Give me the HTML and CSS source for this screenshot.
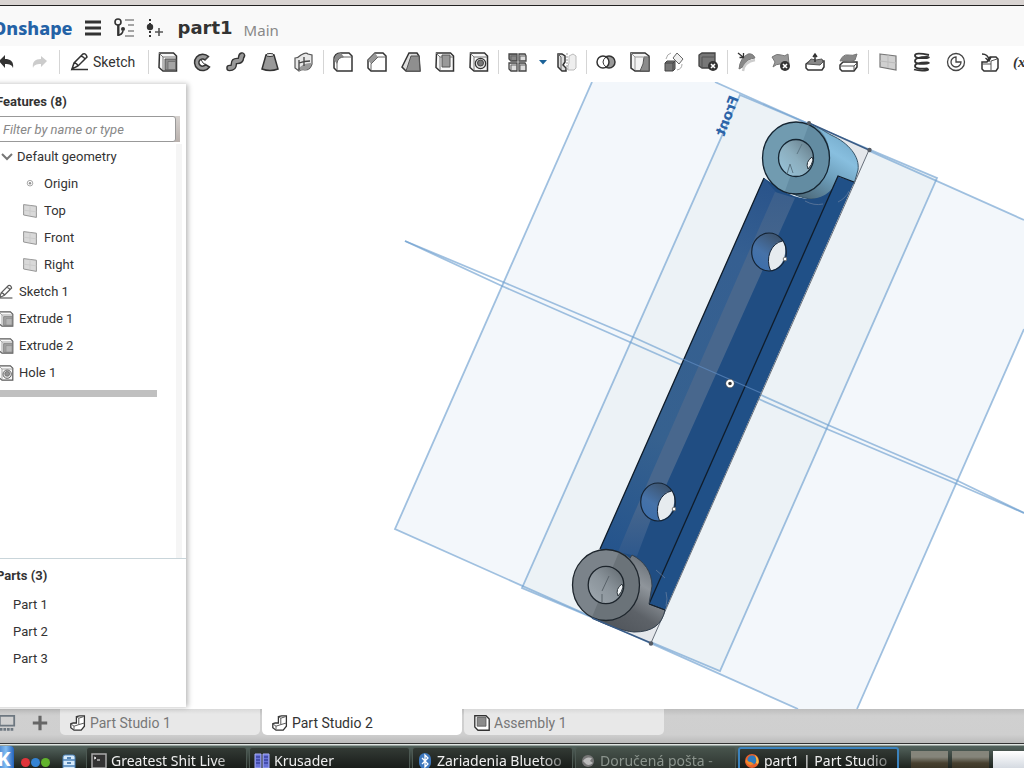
FILE: index.html
```html
<!DOCTYPE html>
<html lang="en">
<head>
<meta charset="utf-8">
<title>part1 | Part Studio 2</title>
<link rel="stylesheet" href="styles.css">
</head>
<body>
<svg class="sprite" aria-hidden="true">
  <symbol id="i-undo" viewBox="0 0 20 20"><path d="M3 9l6-6v4c6 0 9 3 8 9-1-3-3-4-8-4v4z" fill="#333"/></symbol>
  <symbol id="i-redo" viewBox="0 0 20 20"><path d="M17 9l-6-5v3c-6 0-9 3-8 9 1-3 3-4 8-4v3z" fill="#ccc"/></symbol>
  <symbol id="i-pencil" viewBox="0 0 20 20"><path d="M2 17l2-6 9-9q3-1 4 3l-9 9zM4 11q3 0 4 3M11 4q3 1 4 3" fill="#fff" stroke="#333" stroke-width="1.5"/><path d="M1 17.500h17" stroke="#333" stroke-width="1.500"/></symbol>
  <symbol id="i-extrude" viewBox="0 0 20 20"><path d="M1.500 1h14l3 3v15H5L1 15.500z" fill="#f7f7f7" stroke="#333" stroke-width="1.500"/><path d="M1 1l4 4h13M5 5v13" fill="none" stroke="#777"/><path d="M7 7h11v11H7z" fill="#8c8c8c" stroke="#555"/><path d="M10 9.500h7.500v8H10z" fill="#a5a5a5" stroke="#666" stroke-width=".7"/></symbol>
  <symbol id="i-revolve" viewBox="0 0 20 20"><path d="M16.500 4.500a8.200 8.200 0 1 0 1 10.500l-4-2.500a3.600 3.600 0 1 1-.5-4.500z" fill="#999" stroke="#333" stroke-width="1.500"/><path d="M13 8l3.500-3.500M9 7.500L11 11l2.500 1.500" fill="none" stroke="#444"/></symbol>
  <symbol id="i-sweep" viewBox="0 0 20 20"><path d="M3.500 16c8 0 1-7 7.500-7 6 0 3-5 5-5.500" fill="none" stroke="#333" stroke-width="6.600" stroke-linecap="round"/><path d="M3.500 16c8 0 1-7 7.500-7 6 0 3-5 5-5.500" fill="none" stroke="#999" stroke-width="3.800" stroke-linecap="round"/></symbol>
  <symbol id="i-loft" viewBox="0 0 20 20"><path d="M6 3L2 17q8 3 16 0L14 3z" fill="#999" stroke="#333" stroke-width="1.500"/><ellipse cx="10" cy="3" rx="4" ry="1.500" fill="#eee" stroke="#333"/></symbol>
  <symbol id="i-thicken" viewBox="0 0 20 20"><path d="M1 6q3 0 6-3 5-3 7-1l4 1v9q-2 6-7 6-3-1-6 1l-4-3z" fill="#e8e8e8" stroke="#555" stroke-width="1.200"/><path d="M4 17q6-7 14-6-2 7-7 7-3-1-6 1z" fill="#999"/><path d="M10 5v9M5 11q5-2 11-2M5 8v10" fill="none" stroke="#444" stroke-width="1.300"/></symbol>
  <symbol id="i-fillet" viewBox="0 0 20 20"><path d="M8 1h8l3 3v15H4l-3-3V8q0-7 7-7z" fill="#fff" stroke="#333" stroke-width="1.500"/><path d="M1 8q1-7 7-7l3 4q-6 0-7 7z" fill="#8a8a8a"/><path d="M4 18v-7q1-6 7-6h7" fill="none" stroke="#666"/></symbol>
  <symbol id="i-chamfer" viewBox="0 0 20 20"><path d="M8 1h8l3 3v15H4l-3-3V8z" fill="#fff" stroke="#333" stroke-width="1.500"/><path d="M1 8l7-7 3 4-7 7z" fill="#999"/><path d="M4 18v-6l7-7h7" fill="none" stroke="#666"/></symbol>
  <symbol id="i-draft" viewBox="0 0 20 20"><path d="M8 1h8l2 3 1 15H5l-4-4z" fill="#ddd" stroke="#333" stroke-width="1.500"/><path d="M10 4h8l1 15H5z" fill="#8f8f8f" stroke="#555"/></symbol>
  <symbol id="i-shell" viewBox="0 0 20 20"><path d="M1.500 1h14l3 3v15H5L1 15.500z" fill="#f7f7f7" stroke="#333" stroke-width="1.500"/><path d="M1 1l4 4h13M5 5v13" fill="none" stroke="#777"/><path d="M7 3h8v12H7z" fill="#999" stroke="#555"/></symbol>
  <symbol id="i-hole" viewBox="0 0 20 20"><path d="M1.500 1h14l3 3v15H5L1 15.500z" fill="#f7f7f7" stroke="#333" stroke-width="1.500"/><path d="M1 1l4 4h13M5 5v13" fill="none" stroke="#777"/><circle cx="11.500" cy="11.500" r="5.200" fill="#ddd" stroke="#333" stroke-width="1.200"/><circle cx="11.500" cy="11" r="3" fill="#777" stroke="#444"/></symbol>
  <symbol id="i-pattern" viewBox="0 0 20 20"><g stroke="#444" stroke-width="1.300"><path d="M1 2h8v7H3L1 7z" fill="#888"/><path d="M11 2h6l1 2v5h-7zM1 11h8v8H3l-2-2zM11 11h6l1 2v6h-7z" fill="#ddd"/></g><path d="M3 9V4h6M12 9V4h6M3 18v-5h6M12 18v-5h6" fill="none" stroke="#666"/></symbol>
  <symbol id="i-mirror" viewBox="0 0 20 20"><path d="M1 2h4l3 2v6l-2 3 3 3v3H5l-4-4z" fill="#ddd" stroke="#333" stroke-width="1.500"/><path d="M4 17V5L1 2" fill="none" stroke="#666"/><path d="M19 4l-3-2-4 2v7l-1 3v4h6l2-2z" fill="#eee" stroke="#bbb"/><path d="M10 1v18" stroke="#999" stroke-dasharray="2 1"/></symbol>
  <symbol id="i-boolean" viewBox="0 0 20 20"><circle cx="13" cy="10" r="6" fill="#999" stroke="#333" stroke-width="1.500"/><circle cx="7" cy="10" r="6" fill="#fff" stroke="#333" stroke-width="1.500"/><path d="M10 5q-6 5 0 10" fill="none" stroke="#333"/></symbol>
  <symbol id="i-split" viewBox="0 0 20 20"><path d="M1 1h14l4 3v15H5l-4-3z" fill="#f4f4f4" stroke="#333" stroke-width="1.500"/><path d="M14 5h5v14h-9q4-7 4-14z" fill="#8b8b8b" stroke="#555"/><path d="M1 1l4 4h13M5 5v13" fill="none" stroke="#999"/></symbol>
  <symbol id="i-transform" viewBox="0 0 20 20"><path d="M1 11l2-2h8v8l-2 2H1z" fill="#777" stroke="#444"/><path d="M1 11h8v8M9 11l2-2" fill="none" stroke="#444"/><path d="M9 6l4-5 6 6-4 5z" fill="#eee" stroke="#666"/><path d="M2 7q1-5 5-6M18 12q0 5-5 6" fill="none" stroke="#aaa"/></symbol>
  <symbol id="i-delete" viewBox="0 0 20 20"><path d="M1 3l3-2h13v13l-3 2H4l-3-2z" fill="#777" stroke="#444" stroke-width="1.300"/><path d="M4 16V5h13" fill="none" stroke="#555"/><circle cx="15" cy="14" r="5" fill="#333"/><path d="M13 12l4 4m0-4l-4 4" stroke="#fff" stroke-width="1.600"/></symbol>
  <symbol id="i-offset" viewBox="0 0 20 20"><path d="M2 17q1-11 9-15 5-1 7 4-8 1-10 6-1 3-6 5z" fill="#888" stroke="#777"/><path d="M6 19q1-9 12-11" fill="none" stroke="#ccc" stroke-width="2.500"/><path d="M1 1l5 4M6.500 1v4.500H2.500" fill="none" stroke="#333" stroke-width="1.300"/></symbol>
  <symbol id="i-delface" viewBox="0 0 20 20"><path d="M1 5q5-4 9-2t7-1l1 10q-4 3-9 0-4 0-7 3l2-5z" fill="#999" stroke="#777"/><circle cx="14" cy="14" r="5" fill="#333"/><path d="M12 12l4 4m0-4l-4 4" stroke="#fff" stroke-width="1.600"/></symbol>
  <symbol id="i-moveface" viewBox="0 0 20 20"><path d="M1 12l4-3h14v6l-2 3H3l-2-2z" fill="#fff" stroke="#333" stroke-width="1.500"/><path d="M2 12l4-5q4 2 11 0l1 3-3 3z" fill="#888" stroke="#555"/><path d="M10 10V3M8 5l2-3 2 3" fill="none" stroke="#333" stroke-width="1.500"/></symbol>
  <symbol id="i-replace" viewBox="0 0 20 20"><path d="M1 13l3-3h14v5l-3 4H3l-2-2z" fill="#fff" stroke="#333" stroke-width="1.500"/><path d="M1 9q3-7 8-6 5 1 9-1l-2 6q-4 2-8 1-4-1-7 0z" fill="#888" stroke="#777"/><path d="M2 14h13l3-3M15 14v4" fill="none" stroke="#555"/></symbol>
  <symbol id="i-plane" viewBox="0 0 20 20"><path d="M2 2l16 2v14L2 15z" fill="#d0d0d0" stroke="#777" stroke-width="1.200"/><path d="M2 9l16 2M10 3v13" stroke="#bbb"/></symbol>
  <symbol id="i-helix" viewBox="0 0 20 20"><path d="M17 3Q3 0 3 3.500T15 6q4-.5 0-1Q3 5 3 9t12 2.500q4-.5 0-1Q3 10.500 3 14t12 2.500q3 1.500-2 2-6 .5-11-1" fill="none" stroke="#333" stroke-width="1.800"/></symbol>
  <symbol id="i-clock" viewBox="0 0 20 20"><circle cx="10" cy="10" r="8.500" fill="#fff" stroke="#444" stroke-width="1.300"/><path d="M10 5v5h5a5 5 0 1 1-5-5z" fill="none" stroke="#444" stroke-width="1.300"/></symbol>
  <symbol id="i-derive" viewBox="0 0 20 20"><path d="M2 10h5l3-5h6l2 2v9l-2 3H4l-2-2z" fill="#fff" stroke="#333" stroke-width="1.500"/><path d="M2 12h9v6M11 12V9l6-2" fill="none" stroke="#555"/><path d="M2 2q6 0 7 6M5.500 6L9 9l2-4" fill="none" stroke="#333" stroke-width="1.500"/></symbol>
  <symbol id="i-origin" viewBox="0 0 20 20"><circle cx="10" cy="9" r="3.500" fill="#fff" stroke="#777"/><circle cx="10" cy="9" r="1.500" fill="#777"/></symbol>
  <symbol id="i-studio" viewBox="0 0 20 20"><path d="M8 2l4-1h6v13l-4 5H5l-4-3v-5l3-1h4z" fill="#fff" stroke="#333" stroke-width="1.600"/><path d="M8 2l3 2v8l-6 2-4-3M11 12l7-2M5 14v4M11 4l6-2" fill="none" stroke="#555" stroke-width="1.200"/></symbol>
  <symbol id="i-assembly" viewBox="0 0 20 20"><path d="M1 1h14l4 4v14H5l-4-4z" fill="#fff" stroke="#333" stroke-width="1.700"/><path d="M4 3h11v11H4z" fill="#8b8b8b" stroke="#555"/></symbol>
  <symbol id="cut" viewBox="0 0 36 40"><ellipse cx="18" cy="20" rx="17.300" ry="19" fill="url(#bore)"/><path d="M31.500 9A16.500 20 0 0 0 19.500 38.500C31 37 37 23 33 10z" fill="#e6ebef"/><path d="M31.500 9A16.500 20 0 0 0 19.500 38.500" fill="none" stroke="#17263a"/><ellipse cx="18" cy="20" rx="17.300" ry="19" fill="none" stroke="#142334" stroke-width="1.200"/><circle cx="34" cy="27" r="1.800" fill="#fff" stroke="#777"/></symbol>
</svg>

<div class="app">
  <div class="window-edge"></div>
  <header class="header">
    <a class="brand" href="#">Onshape</a>
    <button class="icon-button" aria-label="Menu"><svg viewBox="0 0 18 18"><path d="M1 3h16M1 9h16M1 15h16" stroke="#333" stroke-width="3"/></svg></button>
    <button class="icon-button versions" aria-label="Versions and history"><svg viewBox="0 0 22 20"><g fill="none" stroke="#333" stroke-width="1.600"><circle cx="5" cy="4" r="3"/><path d="M5 7v10q4 0 5-4"/></g><path d="M4.500 7h2v11h-2z" fill="#333"/><circle cx="10" cy="11" r="2" fill="#333"/><path d="M12 2h9M12 18h9M15 7h6M15 13h6" stroke="#888" stroke-width="1.500"/></svg></button>
    <button class="icon-button" aria-label="Create version"><svg viewBox="0 0 18 20"><path d="M4 1v18" stroke="#333" stroke-width="2" stroke-dasharray="2 2"/><circle cx="4" cy="9" r="3.200" fill="#333"/><path d="M13 10v8M9 14h8" stroke="#555" stroke-width="1.600"/></svg></button>
    <h1 class="doc-name">part1</h1>
    <span class="branch">Main</span>
  </header>

  <nav class="toolbar" aria-label="Features toolbar">
    <button class="tool" aria-label="Undo"><svg><use href="#i-undo"/></svg></button>
    <button class="tool" aria-label="Redo"><svg><use href="#i-redo"/></svg></button>
    <span class="separator"></span>
    <button class="sketch-button"><svg><use href="#i-pencil"/></svg>Sketch</button>
    <span class="separator"></span>
    <button class="tool" aria-label="Extrude"><svg><use href="#i-extrude"/></svg></button>
    <button class="tool" aria-label="Revolve"><svg><use href="#i-revolve"/></svg></button>
    <button class="tool" aria-label="Sweep"><svg><use href="#i-sweep"/></svg></button>
    <button class="tool" aria-label="Loft"><svg><use href="#i-loft"/></svg></button>
    <button class="tool" aria-label="Thicken"><svg><use href="#i-thicken"/></svg></button>
    <span class="separator"></span>
    <button class="tool" aria-label="Fillet"><svg><use href="#i-fillet"/></svg></button>
    <button class="tool" aria-label="Chamfer"><svg><use href="#i-chamfer"/></svg></button>
    <button class="tool" aria-label="Draft"><svg><use href="#i-draft"/></svg></button>
    <button class="tool" aria-label="Shell"><svg><use href="#i-shell"/></svg></button>
    <button class="tool" aria-label="Hole"><svg><use href="#i-hole"/></svg></button>
    <span class="separator"></span>
    <button class="tool" aria-label="Linear pattern"><svg><use href="#i-pattern"/></svg></button>
    <button class="caret" aria-label="More patterns"><svg viewBox="0 0 8 5"><path d="M0 0h8L4 4.500z" fill="#1b6298"/></svg></button>
    <button class="tool" aria-label="Mirror"><svg><use href="#i-mirror"/></svg></button>
    <span class="separator"></span>
    <button class="tool" aria-label="Boolean"><svg><use href="#i-boolean"/></svg></button>
    <button class="tool" aria-label="Split"><svg><use href="#i-split"/></svg></button>
    <button class="tool" aria-label="Transform"><svg><use href="#i-transform"/></svg></button>
    <button class="tool" aria-label="Delete part"><svg><use href="#i-delete"/></svg></button>
    <span class="separator"></span>
    <button class="tool" aria-label="Modify fillet"><svg><use href="#i-offset"/></svg></button>
    <button class="tool" aria-label="Delete face"><svg><use href="#i-delface"/></svg></button>
    <button class="tool" aria-label="Move face"><svg><use href="#i-moveface"/></svg></button>
    <button class="tool" aria-label="Replace face"><svg><use href="#i-replace"/></svg></button>
    <span class="separator"></span>
    <button class="tool" aria-label="Plane"><svg><use href="#i-plane"/></svg></button>
    <button class="tool" aria-label="Helix"><svg><use href="#i-helix"/></svg></button>
    <button class="tool" aria-label="Mass properties"><svg><use href="#i-clock"/></svg></button>
    <button class="tool" aria-label="Derived"><svg><use href="#i-derive"/></svg></button>
    <button class="variable" aria-label="Variable">(x)</button>
  </nav>

  <main class="workspace">
    <aside class="panel">
      <section class="features">
        <h2 class="panel-title">Features (8)</h2>
        <div class="filter-row"><input class="filter" type="text" aria-label="Filter features" placeholder="Filter by name or type"></div>
        <div class="feature-scroll">
          <ul class="list">
            <li class="row group"><svg viewBox="0 0 12 12"><path d="M1 3l5 5 5-5" fill="none" stroke="#555" stroke-width="2"/></svg>Default geometry</li>
            <li class="row child"><svg><use href="#i-origin"/></svg>Origin</li>
            <li class="row child"><svg><use href="#i-plane"/></svg>Top</li>
            <li class="row child"><svg><use href="#i-plane"/></svg>Front</li>
            <li class="row child"><svg><use href="#i-plane"/></svg>Right</li>
            <li class="row"><svg><use href="#i-pencil"/></svg>Sketch 1</li>
            <li class="row"><svg><use href="#i-extrude"/></svg>Extrude 1</li>
            <li class="row"><svg><use href="#i-extrude"/></svg>Extrude 2</li>
            <li class="row"><svg><use href="#i-hole"/></svg>Hole 1</li>
          </ul>
          <div class="rollback"></div>
        </div>
      </section>
      <section class="parts">
        <h2 class="panel-title">Parts (3)</h2>
        <ul class="list">
          <li class="row part">Part 1</li>
          <li class="row part">Part 2</li>
          <li class="row part">Part 3</li>
        </ul>
      </section>
    </aside>

    <div class="viewport">
      <svg class="scene" viewBox="186 82 838 627" preserveAspectRatio="xMinYMin slice" role="img" aria-label="Model view">
        <defs>
          <linearGradient id="bore" x1="0" y1="1" x2=".6" y2="0"><stop offset="0" stop-color="#3a6dab"/><stop offset=".5" stop-color="#4672a8"/><stop offset="1" stop-color="#3d546f"/></linearGradient>
          <linearGradient id="blueBody" x1=".2" y1="1" x2=".8" y2="0"><stop offset="0" stop-color="#4b6676"/><stop offset=".4" stop-color="#6ea0bd"/><stop offset=".65" stop-color="#88bfdf"/><stop offset="1" stop-color="#6da2c2"/></linearGradient>
          <linearGradient id="blueBore" x1="0" y1="1" x2="1" y2="0"><stop offset="0" stop-color="#99c6dd"/><stop offset=".5" stop-color="#8badbd"/><stop offset="1" stop-color="#5f7582"/></linearGradient>
          <linearGradient id="greyBody" x1="0" y1="1" x2=".6" y2="0"><stop offset="0" stop-color="#4a4f55"/><stop offset=".45" stop-color="#5d6268"/><stop offset=".75" stop-color="#8f959b"/><stop offset="1" stop-color="#6d747b"/></linearGradient>
          <linearGradient id="greyBore" x1="0" y1="1" x2="1" y2="0"><stop offset="0" stop-color="#a0a9b0"/><stop offset=".5" stop-color="#8b949b"/><stop offset="1" stop-color="#5e666c"/></linearGradient>
          <linearGradient id="leftFace" gradientUnits="userSpaceOnUse" x1="764" y1="178" x2="610" y2="550"><stop offset="0" stop-color="#29538a"/><stop offset=".2" stop-color="#355f91"/><stop offset=".7" stop-color="#36618f"/><stop offset="1" stop-color="#25548c"/></linearGradient>
          <linearGradient id="band" x1="0" y1="0" x2="0" y2="1"><stop offset="0" stop-color="#3b5f8c"/><stop offset=".2" stop-color="#48678d"/><stop offset=".85" stop-color="#48678d"/><stop offset="1" stop-color="#2e588c"/></linearGradient>
        </defs>
        <path d="M592 82h123l309 138v109L857 709h-59L395 529z" fill="#f3f7fb"/>
        <path d="M740 95l197 83-217 493-198-83z" fill="#ecf2f6"/>
        <g fill="none" stroke="#6f9fd0" stroke-opacity=".65" stroke-width="1.800">
          <path d="M592 82L395 529l403 180M715 82l309 138M1024 329L857 709"/>
          <path d="M740 95l197 83-217 493-198-83z"/>
          <path d="M405 241l98 41 130 55 128 58 67 30 128 55 68 33"/>
          <path d="M405 241l97 45 130 57 129 57 66 29 130 55 67 29"/>
        </g>
        <path d="M809 123l60 27-15 33-40 2zM592 618l59 25 15-34-40-10z" fill="#e4e7eb"/>
        <path d="M809 123c11 5 15 8 22 12 18 8 29 22 27 35l-4 14-16-6c-4 13-14 22-26 21-11-1-17-4-25-8z" fill="url(#blueBody)" stroke="#355469"/>
        <path d="M764 178l23 15q12 6 25 6 21-3 26-22l16 5-189 428-20-6-45-55z" fill="#204d82"/>
        <path d="M764 178q8 10 13 15L620 551l-20-2z" fill="url(#leftFace)"/>
        <path d="M775 192l20 6-144 321-14 37-19-4 15-36z" fill="url(#band)"/>
        <path d="M838 177l16 5-189 428-16-6z" fill="#205087"/>
        <path d="M764 178L600 549M649 604l189-428 16 6M649 604l16 6" fill="none" stroke="#101d2b" stroke-width="1.300"/>
        <path d="M869 150L651 643" stroke="#666e79"/>
        <path d="M805 201q9 5 18 3M838 202q8-4 11-11M656 570l9 8M666 592q2 7 0 14" fill="none" stroke="#7788a5" opacity=".6"/>
        <use href="#cut" x="751" y="232" width="36" height="40"/>
        <use href="#cut" x="640" y="482" width="36" height="40"/>
        <path d="M683 359l62 27 16 7" fill="none" stroke="#608cc2" stroke-width="1.300" opacity=".7"/>
        <path d="M592 618c15 7 30 13 42 14 18 0 28-7 31-22l-16-6 3-18c0-14-8-25-20-31z" fill="url(#greyBody)" stroke="#33404e"/>
        <path d="M649 604l16 6" stroke="#101d2b"/>
        <ellipse cx="796" cy="158" rx="33.500" ry="36" fill="#719bb0"/>
        <path d="M809 124c15 5 23 20 20 38-4 19-17 32-36 32l-8-3z" fill="#638ca2"/>
        <ellipse cx="796" cy="158" rx="33.500" ry="36" fill="none" stroke="#152532" stroke-width="1.300"/>
        <ellipse cx="796" cy="158" rx="17.500" ry="18.500" fill="url(#blueBore)" stroke="#152532" stroke-width="1.300"/>
        <path d="M812 157q-7 5-4 12 4-4 5-9z" fill="#eef2f4" stroke="#26323b"/>
        <path d="M787 174l3-10 3 9M797 154l5-10" fill="none" stroke="#5d7785"/>
        <ellipse cx="606" cy="585" rx="33.500" ry="35.500" fill="#7b838a"/>
        <path d="M619 552c15 5 23 20 20 38-4 19-17 31-36 30l-11-3z" fill="#6b7379"/>
        <ellipse cx="606" cy="585" rx="33.500" ry="35.500" fill="none" stroke="#1d252c" stroke-width="1.300"/>
        <ellipse cx="606" cy="585" rx="17.800" ry="18.700" fill="url(#greyBore)" stroke="#1d252c" stroke-width="1.300"/>
        <path d="M622 584q-7 5-4 12 4-4 5-9z" fill="#eef2f4" stroke="#30383e"/>
        <path d="M609 576l-7 15M602 594v8" stroke="#596269"/>
        <path d="M809 123l60 27M592 618l59 25" stroke="#395b86" stroke-width="1.500"/>
        <g fill="#555b64"><circle cx="809" cy="123" r="2"/><circle cx="869.500" cy="150" r="2.200"/><circle cx="651" cy="643.500" r="2.200"/></g>
        <circle cx="730" cy="383.500" r="3" fill="#333" stroke="#fff" stroke-width="2.400"/><circle cx="730" cy="383.500" r="4.300" fill="none" stroke="#444" stroke-width=".6"/>
        <text class="plane-label" transform="translate(739 98) rotate(111) scale(1 -1)">Front</text>
      </svg>
    </div>
  </main>

  <nav class="tabs" aria-label="Document tabs">
    <button class="tab-tool" aria-label="Tab manager"><svg viewBox="0 0 20 20"><path d="M2 2h16v11H2z" fill="none" stroke="#6d7780" stroke-width="2"/><path d="M2 17h16" stroke="#6d7780" stroke-width="3" stroke-dasharray="3 1"/></svg></button>
    <button class="tab-tool" aria-label="New tab"><svg viewBox="0 0 20 20"><path d="M10 2v16M2 10h16" stroke="#666" stroke-width="3.500"/></svg></button>
    <button class="tab"><svg><use href="#i-studio"/></svg>Part Studio 1</button>
    <button class="tab active"><svg><use href="#i-studio"/></svg>Part Studio 2</button>
    <button class="tab"><svg><use href="#i-assembly"/></svg>Assembly 1</button>
  </nav>

  <footer class="taskbar">
    <button class="launcher" aria-label="Application launcher">K</button>
    <span class="balls"><i class="red"></i><i class="blue"></i><i class="green"></i></span>
    <svg class="cabinet" viewBox="0 0 14 18"><rect x="1" y="1" width="12" height="18" rx="2" fill="#d5e9fa" stroke="#4c83b9"/><path d="M1 6h12M1 12h12" stroke="#4c83b9" stroke-width="1.500"/><path d="M5 4h4M5 9h4M5 15h4" stroke="#2c649d" stroke-width="1.500"/></svg>
    <button class="task"><svg viewBox="0 0 16 16"><path d="M1 1h14v14H1z" fill="#333" stroke="#aaa" stroke-width="1.500"/><path d="M3 4l2 1-2 1M6 7h3" stroke="#fff" fill="none"/></svg><span>Greatest Shit Live</span></button>
    <button class="task"><svg viewBox="0 0 16 16"><path d="M1 1h6v14H1zM9 1h6v14H9z" fill="#6771d8" stroke="#a9aff5"/><path d="M2 4h4M2 7h4M2 10h4M10 4h4M10 7h4M10 10h4" stroke="#252c82"/></svg><span>Krusader</span></button>
    <button class="task"><svg viewBox="0 0 16 16"><rect x="2" width="12" height="16" rx="6" fill="#3e78be"/><path d="M5 5l6 6-3 3V2l3 3-6 6" fill="none" stroke="#fff" stroke-width="1.300"/></svg><span>Zariadenia Bluetoo</span></button>
    <button class="task dim"><svg viewBox="0 0 16 16"><circle cx="8" cy="8" r="6" fill="#777"/><path d="M3 8q3-5 9-3l-2 3 3 2q-5 4-8 0" fill="#bbb"/></svg><span>Doručená pošta -</span></button>
    <button class="task current"><svg viewBox="0 0 16 16"><circle cx="8" cy="8" r="7" fill="#e8602c"/><circle cx="8" cy="7" r="4.500" fill="#2e7bbd"/><path d="M2 5q1 4 5 4l3 2q-5 3-8-2z" fill="#f08c28"/><path d="M11 2q5 4 3 9l-2-1q1-3-1-8z" fill="#f5bd45"/></svg><span>part1 | Part Studio</span></button>
    <span class="pager"><i></i><i></i><i class="on"></i></span>
  </footer>
</div>
</body>
</html>
```
FILE: styles.css
```css
* { box-sizing: border-box; }
body { margin: 0; overflow: hidden; background: #fff; color: #333; font: 14px/20px Roboto, "Noto Sans", sans-serif; }
button { margin: 0; padding: 0; border: 0; background: none; color: inherit; font: inherit; cursor: pointer; }
h1, h2, ul { margin: 0; padding: 0; }
ul { list-style: none; }
.sprite { display: none; }

/* The shell starts slightly left of the window's visible area. */
.app { display: flex; flex-direction: column; height: 100vh; margin-left: -8px; }
.window-edge { flex: none; height: 6px; background: #d9d4d2; border-bottom: 1px solid #222; }

.header { flex: none; display: flex; align-items: center; gap: 11px; height: 40px; padding: 4px 0 0; background: #f9f9f9; }
.brand { color: #2462a6; font: 800 18px/24px "Noto Sans", sans-serif; text-decoration: none; }
.icon-button { display: flex; }
.icon-button svg { width: 18px; height: 20px; }
.versions svg { width: 22px; }
.doc-name { margin-left: 3px; font: 700 18px/28px "DejaVu Sans", sans-serif; }
.branch { padding-top: 4px; color: #888; font: 15px/20px "Noto Sans", sans-serif; }

.toolbar { flex: none; display: flex; align-items: center; height: 36px; margin-left: -3px; padding: 0 0 4px; overflow: hidden; background: #fff; }
.tool { flex: none; display: flex; justify-content: center; align-items: center; width: 34px; height: 28px; }
.tool svg, .sketch-button svg { width: 20px; height: 20px; }
.separator { flex: none; width: 1px; height: 24px; margin: 0 2px; background: #d5d5d5; }
.sketch-button { flex: none; display: flex; align-items: center; gap: 3px; width: 84px; padding-left: 8px; }
.caret { flex: none; display: flex; justify-content: center; width: 15px; }
.caret svg { width: 8px; height: 5px; }
.variable { flex: none; padding-left: 6px; font: italic 700 15px/20px "Liberation Serif", serif; }

.workspace { flex: 1; display: flex; min-height: 0; }
.panel { flex: none; z-index: 1; display: flex; flex-direction: column; width: 194px; margin: 2px 0; background: #fff; box-shadow: 2px 0 5px rgba(0, 0, 0, .28); }
.features { flex: 1; display: flex; flex-direction: column; min-height: 0; }
.panel-title { padding-left: 4px; color: #333; font-size: 13px; line-height: 20px; font-weight: 700; }
.features .panel-title { padding-top: 8px; }
.filter-row { margin: 4px 6px 2px 0; padding-right: 4px; background: linear-gradient(#d6d2cf, #b9b1ad); }
.filter { display: block; width: 100%; height: 26px; padding: 0 10px; border: 1px solid #999; border-radius: 3px; background: #fff; font: italic 13px/20px Roboto, sans-serif; }
.filter::placeholder { color: #888; opacity: 1; }
.feature-scroll { flex: 1; margin-right: 4px; border-right: 6px solid #f5f5f5; }
.row { display: flex; align-items: center; gap: 5px; height: 27px; padding-left: 6px; color: #333; font-size: 13px; }
.row svg { flex: none; width: 16px; height: 16px; opacity: .8; }
.group { gap: 4px; height: 26px; padding-left: 9px; }
.group svg { width: 12px; height: 12px; }
.child { gap: 6px; padding-left: 30px; }
.part { padding-left: 21px; }
.rollback { width: 165px; height: 7px; margin-top: 4px; background: #c0c0c0; }
.parts { flex: none; height: 149px; padding-top: 7px; border-top: 1px solid #c9d5da; }
.parts .panel-title { padding-bottom: 5px; }

.viewport { flex: 1; min-width: 0; overflow: hidden; background: #fff; }
.scene { display: block; width: 100%; height: 100%; }
.plane-label { fill: #2c64a8; font: 700 14px "DejaVu Sans", sans-serif; }

.tabs { flex: none; display: flex; gap: 2px; height: 34px; padding: 0 0 8px 2px; background: linear-gradient(#bdbdbd, #d0d0d0 20%, #cfcfcf 75%, #bbb); }
.tab-tool { flex: none; display: flex; align-items: center; justify-content: center; width: 31px; padding: 2px 5px 0 0; }
.tab-tool svg { width: 18px; height: 18px; }
.tab { display: flex; align-items: center; gap: 4px; flex: 0 1 200px; padding: 2px 0 0 10px; border-radius: 0 0 5px 5px; background: linear-gradient(#d9d9d9, #e8e8e8 20%); color: #777; }
.tab svg { width: 16px; height: 16px; }
.tab.active { background: #fff; color: #333; }

.taskbar { flex: none; display: flex; align-items: flex-start; height: 25px; padding: 2px 0 0 2px; overflow: hidden; border-top: 1px solid #333; background: linear-gradient(#e0e5e2 1px, #53635d 2px, #1e231e); color: #eee; font: 14px/20px "Noto Sans", sans-serif; }
.launcher { flex: none; width: 20px; height: 26px; border-radius: 4px; background: linear-gradient(90deg, #2463bd, #83bdf2 60%, #2463bd); color: #fff; font: 700 20px/24px "Noto Sans", sans-serif; }
.balls { flex: none; display: flex; gap: 1px; padding: 12px 0 0 7px; }
.balls i { width: 9px; height: 9px; border-radius: 50%; }
.red { background: #e0343a; }
.blue { background: #3483d2; }
.green { background: #61b32c; }
.cabinet { flex: none; width: 14px; height: 18px; margin: 8px 9px 0 12px; }
.task { flex: 0 1 161px; display: flex; align-items: center; gap: 4px; min-width: 0; height: 28px; margin: 1px 1px 0; padding: 0 4px; overflow: hidden; border: 1px solid #4c5852; border-radius: 3px; background: linear-gradient(#333a35, #111411); text-align: left; white-space: nowrap; }
.task svg { flex: none; width: 16px; height: 16px; }
.task span { flex: 1; min-width: 0; overflow: hidden; mask-image: linear-gradient(90deg, #000 78%, rgba(0, 0, 0, .25)); }
.dim { background: linear-gradient(#47534c, #272d28); color: #8b948d; }
.current { border: 2px solid #3b82bd; }
.pager { flex: 1 1 0; display: flex; gap: 4px; min-width: 0; padding: 5px 0 0 11px; overflow: hidden; }
.pager i { flex: none; width: 37px; height: 24px; background: linear-gradient(#85857b 6px, #47402f 12px, #2c271d); }
.pager .on { background: linear-gradient(#fff, #c4cbd5); }
```
